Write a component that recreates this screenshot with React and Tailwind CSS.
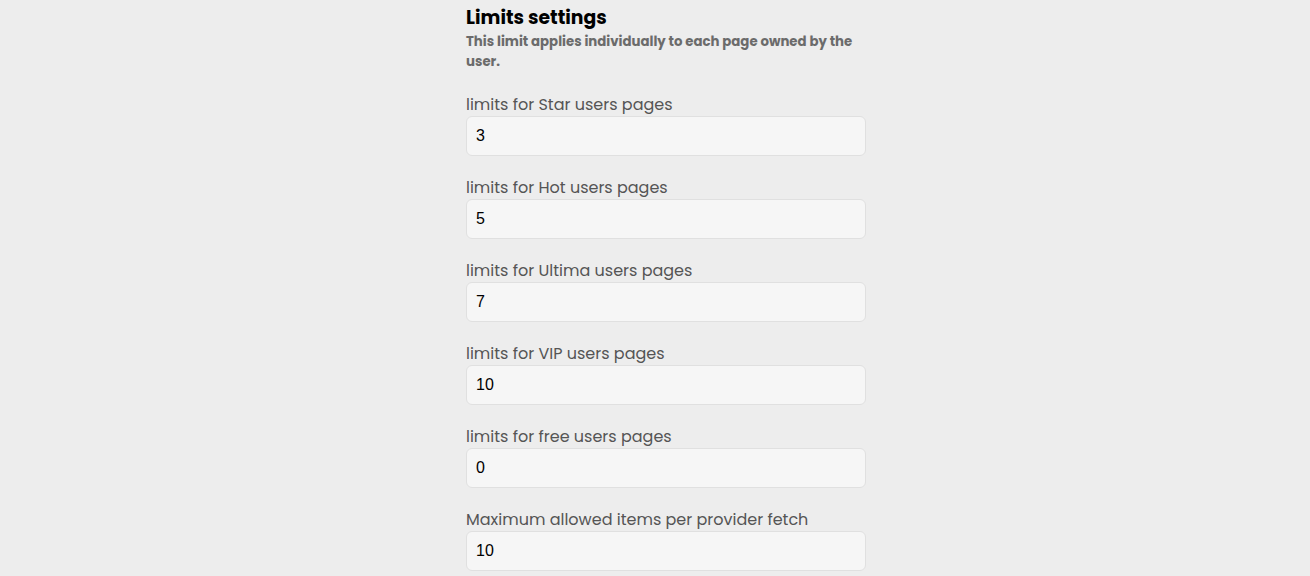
const fields = [
  { label: "limits for Star users pages", value: "3" },
  { label: "limits for Hot users pages", value: "5" },
  { label: "limits for Ultima users pages", value: "7" },
  { label: "limits for VIP users pages", value: "10" },
  { label: "limits for free users pages", value: "0" },
  { label: "Maximum allowed items per provider fetch", value: "10" },
];

export default function App() {
  return (
    <div
      className="min-h-screen bg-[#ededed] flex justify-center"
      style={{ fontFamily: "Poppins, 'Open Sans', sans-serif" }}
    >
      <div className="w-[400px] pt-1 ml-[22px]">
        {/* Heading */}
        <h2 className="text-[18.8px] leading-7 font-bold text-black">Limits settings</h2>
        <p className="text-[13.3px] leading-5 font-bold text-[#6b6b6b] max-w-[392px]">
          This limit applies individually to each page owned by the user.
        </p>

        {/* Fields */}
        <div className="mt-5 flex flex-col gap-[19px]">
          {fields.map((f) => (
            <div key={f.label}>
              <label className="block text-base leading-6 pt-px text-[#555555]">{f.label}</label>
              <input
                type="text"
                defaultValue={f.value}
                className="w-full h-10 -mt-px rounded-md border border-[#e0e0e0] bg-[#f6f6f6] pl-[9px] text-base text-black outline-none"
                style={{ fontFamily: "'Liberation Sans', Arial, sans-serif" }}
              />
            </div>
          ))}
        </div>
      </div>
    </div>
  );
}
